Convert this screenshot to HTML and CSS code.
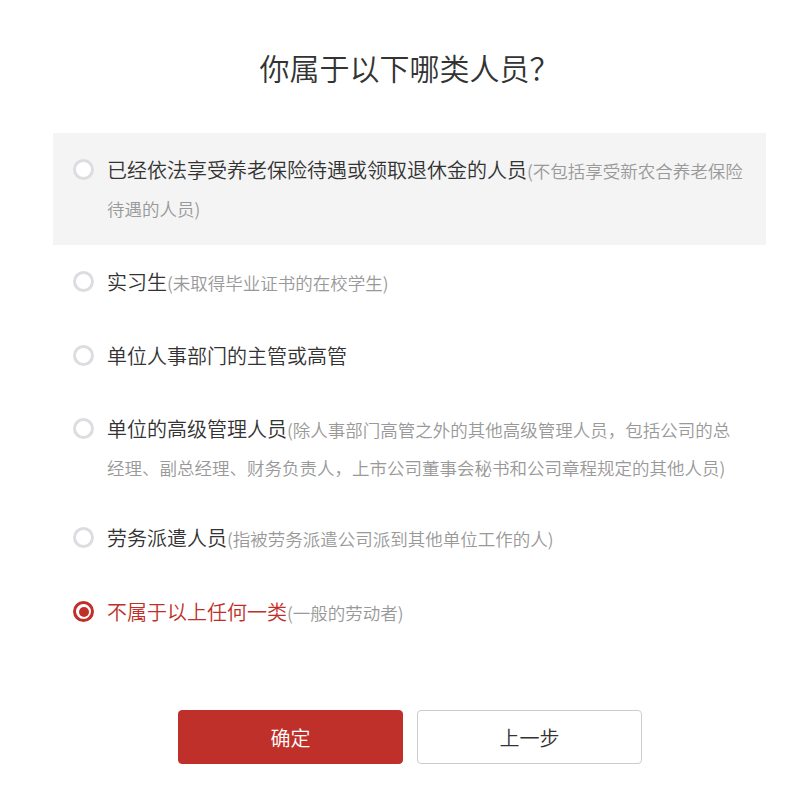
FILE: index.html
```html
<!DOCTYPE html>
<html lang="zh-CN">
<head>
<meta charset="utf-8">
<title>你属于以下哪类人员？</title>
<link rel="stylesheet" href="styles.css">
</head>
<body>
<div class="page">
  <h1 class="title">你属于以下哪类人员？</h1>
  <ul class="options">
    <li class="option hover">
      <span class="radio"></span>
      <span class="label">已经依法享受养老保险待遇或领取退休金的人员<span class="hint">(不包括享受新农合养老保险待遇的人员)</span></span>
    </li>
    <li class="option">
      <span class="radio"></span>
      <span class="label">实习生<span class="hint">(未取得毕业证书的在校学生)</span></span>
    </li>
    <li class="option">
      <span class="radio"></span>
      <span class="label">单位人事部门的主管或高管</span>
    </li>
    <li class="option multi">
      <span class="radio"></span>
      <span class="label">单位的高级管理人员<span class="hint">(除人事部门高管之外的其他高级管理人员，包括公司的总经理、副总经理、财务负责人，上市公司董事会秘书和公司章程规定的其他人员)</span></span>
    </li>
    <li class="option">
      <span class="radio"></span>
      <span class="label">劳务派遣人员<span class="hint">(指被劳务派遣公司派到其他单位工作的人)</span></span>
    </li>
    <li class="option selected">
      <span class="radio"></span>
      <span class="label">不属于以上任何一类<span class="hint">(一般的劳动者)</span></span>
    </li>
  </ul>
  <div class="actions">
    <button class="btn btn-primary">确定</button>
    <button class="btn btn-default">上一步</button>
  </div>
</div>
</body>
</html>
```
FILE: styles.css
```css
* { box-sizing: border-box; }
html, body { margin: 0; padding: 0; background: #fff; }
body {
  font-family: "Microsoft YaHei", "Noto Sans CJK SC", "Noto Sans", sans-serif;
  font-weight: 350;
  color: #333;
}
.page {
  margin-left: 53px;
  width: 713px;
  padding-top: 47px;
}
.title {
  margin: 0 0 46px;
  font-size: 30px;
  line-height: 40px;
  font-weight: 350;
  text-align: center;
  color: #333;
}
.options {
  list-style: none;
  margin: 0;
  padding: 0;
}
.option {
  display: flex;
  align-items: flex-start;
  gap: 14px;
  padding: 18px 20px;
  font-size: 20px;
  line-height: 37px;
}
.option.hover { background: #f4f4f4; }
.option.multi { padding-bottom: 15px; }
.radio {
  flex: none;
  width: 21px;
  height: 21px;
  margin-top: 8px;
  border: 3px solid #dcdde0;
  border-radius: 50%;
  background: #fff;
  position: relative;
}
.selected .radio { border-color: #c0302a; }
.selected .radio::after {
  content: "";
  position: absolute;
  left: 2.5px;
  top: 2.5px;
  width: 10px;
  height: 10px;
  border-radius: 50%;
  background: #c0302a;
}
.label { flex: 1; margin-left: -1px; }
.selected .label { color: #c0302a; }
.hint { font-size: 17.5px; color: #999; }
.actions {
  display: flex;
  gap: 14px;
  margin-top: 61px;
  padding-left: 125px;
}
.btn {
  width: 225px;
  height: 54px;
  border-radius: 4px;
  font-family: inherit;
  font-weight: 350;
  font-size: 20px;
  cursor: pointer;
}
.btn-primary {
  background: #c0302a;
  border: 1px solid #c0302a;
  color: #fff;
}
.btn-default {
  background: #fff;
  border: 1px solid #cccccc;
  color: #333;
}
```
